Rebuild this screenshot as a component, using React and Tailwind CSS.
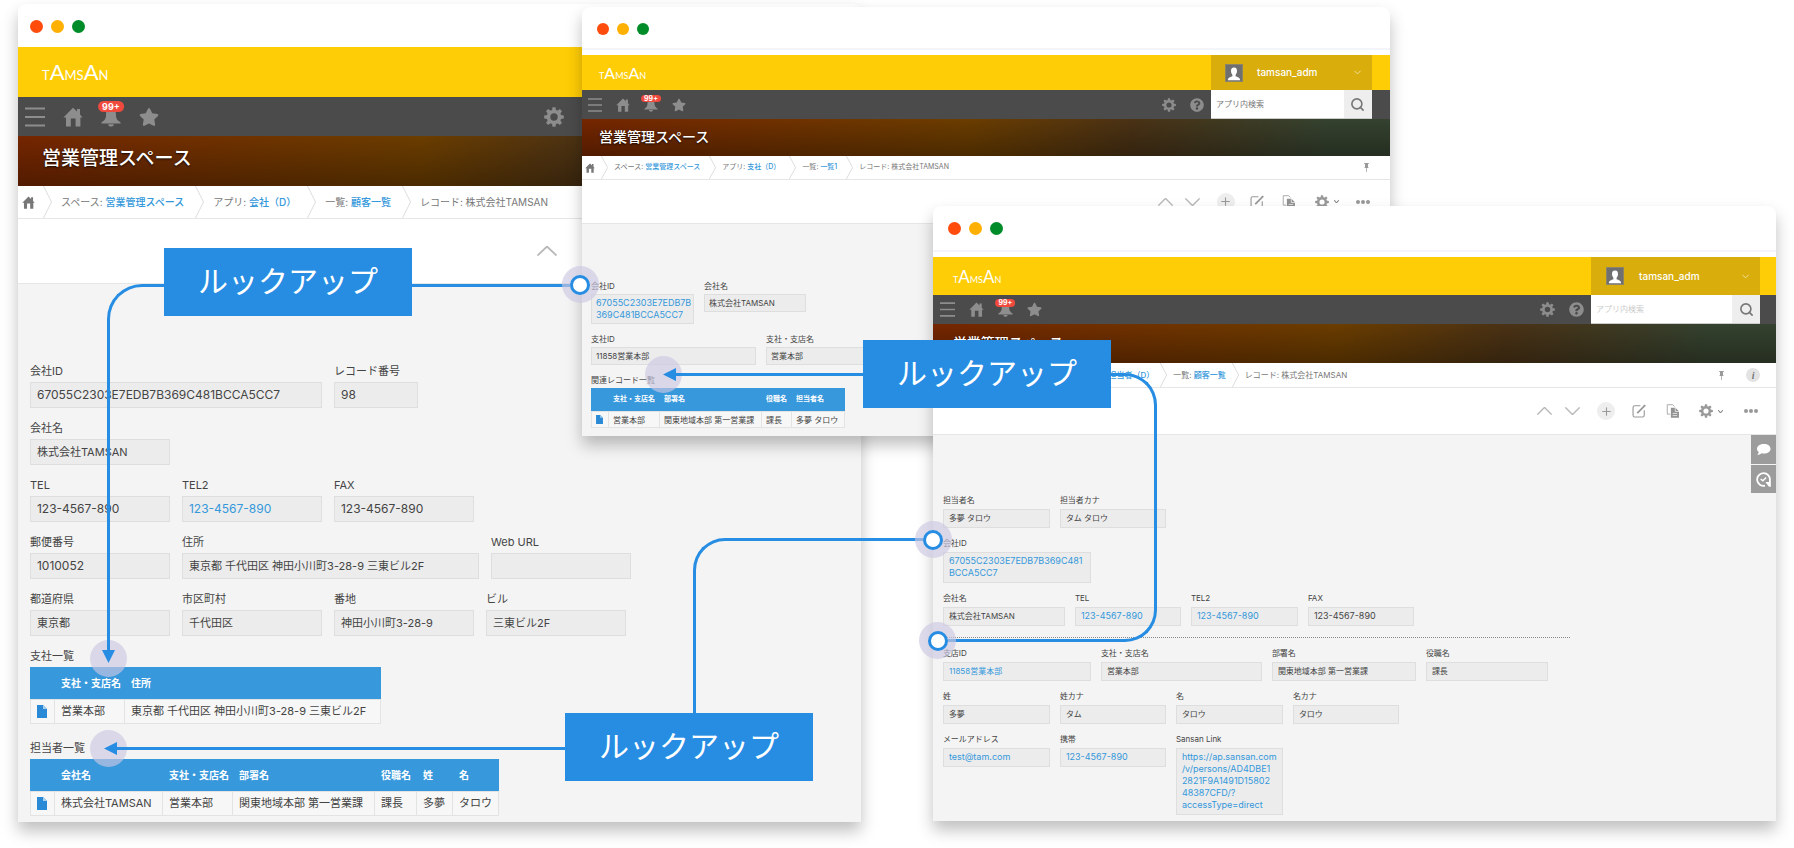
import React from 'react';
import { ChevronDown, Plus, Search } from 'lucide-react';
import { FaQuestionCircle, FaStar } from 'react-icons/fa';

// Tamaños de cada ventana: grande, pequeña y mediana
const sizes = {
  lg: {
    titleBar: 'h-[43px] pl-3 pt-[2px] gap-2',
    dot: 'size-[13px]',
    line: 'hidden',
    brand: 'h-[50px] pl-6',
    logo: 'text-[13px]',
    logoBig: 'text-[22px]',
    nav: 'h-[39px] pl-[7px] pr-[297px]',
    navGap: 'gap-[18px]',
    icon: 'size-5',
    badge: 'text-[9px] px-1 -top-[6px] h-[11px] leading-[11px]',
    hero: 'h-[50px] pl-6 pb-1 text-[19px]',
    crumbs: 'h-[33px] text-[10px]',
    crumbHome: 'pl-[4px] pr-2',
    crumbHomeIcon: 'size-[13px]',
    crumb: 'pl-[9px] pr-[11px]',
    crumbArrow: 'w-[9px]',
    toolbar: 'h-[65px]',
    body: 'pt-[77px] pb-[6px] pl-3',
    rows: 'gap-[10px]',
    row: 'gap-3',
    label: 'h-[21px] leading-[20px] text-[11px]',
    value: 'h-[26px] px-[6px] leading-[24px] text-[11px]',
    latin: 'text-[12px]',
    th: 'h-8 pl-[7px] text-[10px]',
    td: 'h-[25px] pl-[7px] text-[11px]',
    file: 'w-[10px] h-[13px]',
  },
  sm: {
    titleBar: 'h-[41px] pl-[15px] pt-[2px] gap-2',
    dot: 'size-3',
    line: 'h-[7px]',
    brand: 'h-[35px] pl-[17px]',
    logo: 'text-[9px]',
    logoBig: 'text-[16px]',
    nav: 'h-[29px] pl-[6px] pr-[18px]',
    navGap: 'gap-[14px]',
    icon: 'size-[14px]',
    badge: 'text-[7px] px-[3px] -top-[3px] h-[7px] leading-[8px]',
    hero: 'h-[37px] pl-[17px] pb-[3px] text-[14px]',
    crumbs: 'h-[24px] text-[7px]',
    crumbHome: 'pl-[3px] pr-[6px]',
    crumbHomeIcon: 'size-[10px]',
    crumb: 'pl-[6px] pr-[9px]',
    crumbArrow: 'w-[7px]',
    toolbar: 'h-[44px]',
    body: 'pt-[55px] pb-2 pl-[9px]',
    rows: 'gap-2',
    row: 'gap-[10px]',
    label: 'h-[15px] leading-[14px] text-[8px]',
    value: 'px-[4px] py-[2px] leading-[12px] text-[8px]',
    latin: 'text-[9px]',
    th: 'h-[23px] pl-[5px] text-[7px]',
    td: 'h-[17px] pl-[5px] text-[8px]',
    file: 'w-[7px] h-[9px]',
    tools: 'mr-5',
    downGap: 'ml-3',
    editGap: 'ml-[15px]',
    copyGap: 'ml-[18px]',
    moreGap: 'ml-[17px]',
  },
  md: {
    titleBar: 'h-[44px] pl-[15px] gap-2',
    dot: 'size-[13px]',
    line: 'h-[7px]',
    brand: 'h-[38px] pl-5',
    logo: 'text-[9px]',
    logoBig: 'text-[17px]',
    nav: 'h-[29px] pl-[7px] pr-[16px]',
    navGap: 'gap-[14px]',
    icon: 'size-[15px]',
    badge: 'text-[7px] px-[3px] -top-[3px] h-[8px] leading-[8px]',
    hero: 'h-[39px] pl-5 pb-[3px] text-[14px]',
    crumbs: 'h-[25px] text-[8px]',
    crumbHome: 'pl-[3px] pr-[121px]',
    crumbHomeIcon: 'size-[10px]',
    crumb: 'pl-[6px] pr-[6px]',
    crumbArrow: 'w-[7px]',
    toolbar: 'h-[47px]',
    body: 'pt-[58px] pb-[6px] pl-[10px]',
    rows: 'gap-2',
    row: 'gap-[10px]',
    label: 'h-[16px] leading-[14px] text-[8px]',
    value: 'px-[5px] pt-[2px] pb-[3px] leading-[12px] text-[8px]',
    latin: 'text-[9px]',
    th: '',
    td: '',
    file: '',
    tools: 'mr-[18px]',
    downGap: 'ml-[13px]',
    editGap: 'ml-[17px]',
    copyGap: 'ml-5',
    moreGap: 'ml-[21px]',
  },
};

function HomeIcon({ className }) {
  return (
    <svg viewBox="0 0 20 20" fill="currentColor" className={className}>
      <path d="M10 0.8 L14 4.6 V2 H17 V7.6 L19.6 10.4 H17.4 V19.5 H12.6 V11.5 H7.8 V19.5 H3 V10.4 H0.4 Z" />
    </svg>
  );
}

function BellIcon({ className }) {
  return (
    <svg viewBox="0 0 20 20" fill="currentColor" className={className}>
      <path d="M10 1 C13.5 1 15 4 15 8 C15 12 16.5 13.5 19.5 15.2 L19.5 16.6 H0.5 V15.2 C3.5 13.5 5 12 5 8 C5 4 6.5 1 10 1 Z" />
      <path d="M7 17.3 H13 C12.6 19 11.5 19.6 10 19.6 C8.5 19.6 7.4 19 7 17.3 Z" />
    </svg>
  );
}

function MenuIcon({ className }) {
  return (
    <svg viewBox="0 0 20 20" className={className}>
      <path d="M0 1.5 H20 M0 10 H20 M0 18.5 H20" stroke="currentColor" strokeWidth="2.2" />
    </svg>
  );
}

function GearIcon({ className }) {
  return (
    <svg viewBox="0 0 20 20" className={className}>
      <circle cx="10" cy="10" r="5.5" fill="none" stroke="currentColor" strokeWidth="3.6" />
      {[0, 45, 90, 135, 180, 225, 270, 315].map((angle) => (
        <path key={angle} d="M8 3.6 L8.5 0.2 H11.5 L12 3.6 Z" fill="currentColor" transform={`rotate(${angle} 10 10)`} />
      ))}
    </svg>
  );
}

function PinIcon() {
  return (
    <svg viewBox="0 0 10 18" className="h-[9px] w-[5px]" fill="#999999">
      <path d="M0.5 0 H9.5 V2 H8 V8 L9.5 10 H0.5 L2 8 V2 H0.5 Z M4.3 10 H5.7 V18 H4.3 Z" />
    </svg>
  );
}

function FileIcon({ className }) {
  return (
    <svg viewBox="0 0 10 13" className={className}>
      <path d="M0 0 H6 L10 4 V13 H0 Z" fill="#2a8ad6" />
      <path d="M6 0 V4 H10 Z" fill="#a9d2f1" />
    </svg>
  );
}

function EditIcon() {
  return (
    <svg viewBox="0 0 20 20" className="size-[14px]" fill="none" stroke="#999999">
      <path d="M12 2.5 H4 Q1.5 2.5 1.5 5 V16 Q1.5 18.5 4 18.5 H15 Q17.5 18.5 17.5 16 V9" strokeWidth="1.6" />
      <path d="M7.5 13 L17.5 3" strokeWidth="2.6" />
      <path d="M17 3.5 L19 1.5" strokeWidth="2.6" />
    </svg>
  );
}

function CopyIcon() {
  return (
    <svg viewBox="0 0 20 20" className="size-[14px]">
      <path d="M6 14.5 H1.8 V1 H9.5 L12 3.5" fill="none" stroke="#aaaaaa" strokeWidth="1.4" />
      <path d="M7 5.5 H13.5 L18.5 10.5 V19.5 H7 Z" fill="#929292" />
      <path d="M13.3 5.5 V10.7 H18.5 M9.5 13.5 H16 M9.5 16.5 H16" fill="none" stroke="#ffffff" strokeWidth="1" />
    </svg>
  );
}

function Logo({ s }) {
  return (
    <a href="#" className={`font-['Lato'] leading-none text-white ${s.logo}`}>
      T<span className={s.logoBig}>A</span>MS<span className={s.logoBig}>A</span>N
    </a>
  );
}

function UserMenu({ className, pad }) {
  return (
    <button type="button" className={`flex h-full items-center bg-[#d8ad0c] pr-[9px] text-[10px] text-white ${pad} ${className}`}>
      <span className="flex size-[18px] items-end justify-center border border-[#8c8468] bg-[#6f6f6f]">
        <svg viewBox="0 0 16 16" className="size-[14px]" fill="#ffffff">
          <path d="M8 0.5 C10.6 0.5 11.6 2.4 11.4 5 C11.2 7 10.3 8 9.8 9 V10.5 C12 11.5 15 11.8 15 15 H1 C1 11.8 4 11.5 6.2 10.5 V9 C5.7 8 4.8 7 4.6 5 C4.4 2.4 5.4 0.5 8 0.5 Z" />
        </svg>
      </span>
      <span className="font-medium">tamsan_adm</span>
      <ChevronDown className="ml-auto size-[11px] text-[#f3e3a8]" strokeWidth={2} />
    </button>
  );
}

function SearchBox({ className, inputClass }) {
  return (
    <div className={`flex h-full border-b border-[#cccccc] bg-white ${className}`}>
      <input
        type="text"
        aria-label="アプリ内検索"
        placeholder="アプリ内検索"
        className={`min-w-0 flex-1 bg-white px-[5px] text-[8px] outline-none ${inputClass}`}
      />
      <button type="button" aria-label="検索" className="flex w-[28px] items-center justify-center bg-[#eeeeee] text-[#777777]">
        <Search className="size-[15px]" strokeWidth={2.6} />
      </button>
    </div>
  );
}

function Caret({ up, bold, className }) {
  return (
    <svg viewBox="0 0 20 10" preserveAspectRatio="none" className={className} fill="none" stroke={bold ? '#888888' : '#b8b8b8'}>
      <path d={up ? 'M0.5 9.5 L10 0.5 L19.5 9.5' : 'M0.5 0.5 L10 9.5 L19.5 0.5'} strokeWidth={bold ? 4 : 1.8} />
    </svg>
  );
}

function Toolbar({ s }) {
  return (
    <div className={`flex items-center text-[#999999] ${s.tools}`}>
      <button type="button" aria-label="前へ"><Caret up className="h-2 w-[15px]" /></button>
      <button type="button" aria-label="次へ" className={s.downGap}><Caret className="h-2 w-[15px]" /></button>
      <button type="button" aria-label="追加" className="ml-[17px] flex size-[18px] items-center justify-center rounded-full bg-[#eeeeee]">
        <Plus className="size-[13px]" strokeWidth={2} />
      </button>
      <button type="button" aria-label="編集" className={s.editGap}><EditIcon /></button>
      <button type="button" aria-label="複製" className={s.copyGap}><CopyIcon /></button>
      <button type="button" aria-label="設定" className="ml-[19px] flex items-center gap-[5px]">
        <GearIcon className="size-[14px]" />
        <Caret className="h-[3px] w-[5px]" bold />
      </button>
      <button type="button" aria-label="その他" className={`flex gap-px ${s.moreGap}`}>
        <span className="size-1 rounded-full bg-[#999999]" />
        <span className="size-1 rounded-full bg-[#999999]" />
        <span className="size-1 rounded-full bg-[#999999]" />
      </button>
    </div>
  );
}

function Breadcrumbs({ s, items, children }) {
  return (
    <nav className={`flex items-stretch border-b border-[#e6e6e6] bg-white text-[#777777] ${s.crumbs}`}>
      <a href="#" aria-label="ホーム" className={`flex items-center ${s.crumbHome}`}>
        <HomeIcon className={s.crumbHomeIcon} />
      </a>
      {items.map(([prefix, text, isLink]) => (
        <div key={prefix} className="flex items-stretch">
          <svg viewBox="0 0 10 40" preserveAspectRatio="none" className={`h-full ${s.crumbArrow}`} fill="none" stroke="#dddddd">
            <path d="M0.5 0 L9.5 20 L0.5 40" vectorEffect="non-scaling-stroke" />
          </svg>
          <span className={`flex items-center whitespace-pre ${s.crumb}`}>
            {prefix}:{' '}
            {isLink ? <a href="#" className="font-medium text-[#3498db]">{text}</a> : text}
          </span>
        </div>
      ))}
      {children}
    </nav>
  );
}

function Field({ s, label, value, width, link, latin }) {
  return (
    <div className={width}>
      <div className={`whitespace-nowrap text-[#444444] ${s.label}`}>{label}</div>
      <div className={`border border-[#dedede] bg-[#ececec] whitespace-pre text-[#444444] ${s.value} ${latin ? s.latin : ''}`}>
        {link ? <a href="#" className="text-[#3498db]">{value}</a> : value}
      </div>
    </div>
  );
}

function RecordTable({ s, title, cols, head, row }) {
  return (
    <div>
      <div className={`text-[#444444] ${s.label}`}>{title}</div>
      <table className="table-fixed border-collapse text-left">
        <colgroup>
          {cols.map((col, i) => <col key={i} className={col} />)}
        </colgroup>
        <thead>
          <tr className="bg-[#3898dc] text-white">
            <th className={`p-0 ${s.th}`} />
            {head.map((text) => (
              <th key={text} className={`p-0 font-bold whitespace-nowrap ${s.th}`}>{text}</th>
            ))}
          </tr>
        </thead>
        <tbody>
          <tr className="bg-[#f7f7f7] text-[#444444] shadow-[inset_0_0_0_1px_#e3e3e3]">
            <td className={`p-0 ${s.td}`}><FileIcon className={s.file} /></td>
            {row.map((text) => (
              <td key={text} className={`p-0 whitespace-nowrap shadow-[inset_1px_0_0_#e3e3e3] ${s.td}`}>{text}</td>
            ))}
          </tr>
        </tbody>
      </table>
    </div>
  );
}

function AppWindow({ s, className, user, search, crumbs, crumbsEnd, toolbar, children }) {
  return (
    <section className={`absolute rounded-t-lg bg-[#f4f4f4] shadow-[0_9px_16px_rgba(0,0,0,0.25)] ${className}`}>
      <div className={`flex items-center rounded-t-lg bg-white ${s.titleBar}`}>
        <span className={`rounded-full bg-[#ff4b0b] ${s.dot}`} />
        <span className={`rounded-full bg-[#ffb000] ${s.dot}`} />
        <span className={`rounded-full bg-[#008c28] ${s.dot}`} />
      </div>
      <div className={`border-t-2 border-[#f3f5fa] bg-white ${s.line}`} />
      <header className={`flex items-center bg-[#ffcd05] ${s.brand}`}>
        <Logo s={s} />
        {user}
      </header>
      <div className={`flex items-center bg-[#4b4b4b] text-[#8d8d8d] ${s.nav}`}>
        <div className={`flex items-center ${s.navGap}`}>
          <button type="button" aria-label="メニュー"><MenuIcon className={s.icon} /></button>
          <button type="button" aria-label="ホーム"><HomeIcon className={s.icon} /></button>
          <button type="button" aria-label="通知" className="relative">
            <BellIcon className={s.icon} />
            <span className={`absolute left-1/2 -translate-x-1/2 rounded-full bg-[#ef4a3d] font-bold text-white ${s.badge}`}>99+</span>
          </button>
          <button type="button" aria-label="お気に入り"><FaStar className={s.icon} /></button>
        </div>
        {search}
      </div>
      <div className={`flex items-center bg-[linear-gradient(to_bottom,rgba(0,0,0,0),rgba(0,0,0,0.3)),linear-gradient(to_right,#752600,#6b3d00_48%,#4a3215_68%,#35422f_92%)] font-medium text-white text-shadow-[0_1px_2px_rgba(0,0,0,0.8)] ${s.hero}`}>
        営業管理スペース
      </div>
      <Breadcrumbs s={s} items={crumbs}>{crumbsEnd}</Breadcrumbs>
      <div className={`flex items-center justify-end border-b border-[#e6e6e6] bg-white ${s.toolbar}`}>{toolbar}</div>
      <div className={`relative flex flex-col ${s.body} ${s.rows}`}>{children}</div>
    </section>
  );
}

function CompanyWindow() {
  const s = sizes.lg;
  return (
    <AppWindow
      s={s}
      className="top-1 left-[1%] w-[47%]"
      search={<button type="button" aria-label="設定" className="ml-auto"><GearIcon className="size-5" /></button>}
      crumbs={[
        ['スペース', '営業管理スペース', true],
        ['アプリ', '会社（D）', true],
        ['一覧', '顧客一覧', true],
        ['レコード', '株式会社TAMSAN', false],
      ]}
      toolbar={<button type="button" aria-label="前へ" className="mr-[304px]"><Caret up className="h-[10px] w-5" /></button>}
    >
      <div className={`flex ${s.row}`}>
        <Field s={s} label="会社ID" value="67055C2303E7EDB7B369C481BCCA5CC7" width="w-[292px]" latin />
        <Field s={s} label="レコード番号" value="98" width="w-[84px]" latin />
      </div>
      <div className={`flex ${s.row}`}>
        <Field s={s} label="会社名" value="株式会社TAMSAN" width="w-[140px]" />
      </div>
      <div className={`flex ${s.row}`}>
        <Field s={s} label="TEL" value="123-4567-890" width="w-[140px]" latin />
        <Field s={s} label="TEL2" value="123-4567-890" width="w-[140px]" latin link />
        <Field s={s} label="FAX" value="123-4567-890" width="w-[140px]" latin />
      </div>
      <div className={`flex ${s.row}`}>
        <Field s={s} label="郵便番号" value="1010052" width="w-[140px]" latin />
        <Field s={s} label="住所" value="東京都 千代田区 神田小川町3-28-9 三東ビル2F" width="w-[297px]" />
        <Field s={s} label="Web URL" value="" width="w-[140px]" />
      </div>
      <div className={`flex ${s.row}`}>
        <Field s={s} label="都道府県" value="東京都" width="w-[140px]" />
        <Field s={s} label="市区町村" value="千代田区" width="w-[140px]" />
        <Field s={s} label="番地" value="神田小川町3-28-9" width="w-[140px]" />
        <Field s={s} label="ビル" value="三東ビル2F" width="w-[140px]" />
      </div>
      <div className="flex flex-col gap-[14px]">
        <RecordTable
          s={s}
          title="支社一覧"
          cols={['w-[24px]', 'w-[70px]', 'w-[257px]']}
          head={['支社・支店名', '住所']}
          row={['営業本部', '東京都 千代田区 神田小川町3-28-9 三東ビル2F']}
        />
        <RecordTable
          s={s}
          title="担当者一覧"
          cols={['w-[24px]', 'w-[108px]', 'w-[70px]', 'w-[142px]', 'w-[42px]', 'w-[36px]', 'w-[47px]']}
          head={['会社名', '支社・支店名', '部署名', '役職名', '姓', '名']}
          row={['株式会社TAMSAN', '営業本部', '関東地域本部 第一営業課', '課長', '多夢', 'タロウ']}
        />
      </div>
    </AppWindow>
  );
}

function BranchWindow() {
  const s = sizes.sm;
  return (
    <AppWindow
      s={s}
      className="top-[7px] left-[32.44%] w-[45.04%]"
      user={<UserMenu className="mr-[18px] ml-auto w-[161px]" pad="gap-[14px] pl-[14px]" />}
      search={
        <>
          <button type="button" aria-label="設定" className="mr-[14px] ml-auto"><GearIcon className={s.icon} /></button>
          <button type="button" aria-label="ヘルプ" className="mr-[7px]"><FaQuestionCircle className={s.icon} /></button>
          <SearchBox className="w-[161px]" inputClass="placeholder:text-[#777777]" />
        </>
      }
      crumbs={[
        ['スペース', '営業管理スペース', true],
        ['アプリ', '支社（D）', true],
        ['一覧', '一覧1', true],
        ['レコード', '株式会社TAMSAN', false],
      ]}
      crumbsEnd={<button type="button" aria-label="固定" className="mr-[21px] ml-auto"><PinIcon /></button>}
      toolbar={<Toolbar s={s} />}
    >
      <div className={`flex items-start ${s.row}`}>
        <Field s={s} label="会社ID" value={'67055C2303E7EDB7B\n369C481BCCA5CC7'} width="w-[103px]" latin link />
        <Field s={s} label="会社名" value="株式会社TAMSAN" width="w-[102px]" />
      </div>
      <div className={`flex ${s.row}`}>
        <Field s={s} label="支社ID" value="11858営業本部" width="w-[165px]" />
        <Field s={s} label="支社・支店名" value="営業本部" width="w-[160px]" />
      </div>
      <RecordTable
        s={s}
        title="関連レコード一覧"
        cols={['w-[17px]', 'w-[51px]', 'w-[102px]', 'w-[30px]', 'w-[54px]']}
        head={['支社・支店名', '部署名', '役職名', '担当者名']}
        row={['営業本部', '関東地域本部 第一営業課', '課長', '多夢 タロウ']}
      />
    </AppWindow>
  );
}

function ContactWindow() {
  const s = sizes.md;
  return (
    <AppWindow
      s={s}
      className="top-[206px] left-[52%] w-[47%]"
      user={<UserMenu className="mr-4 ml-auto w-[169px]" pad="gap-[15px] pl-[15px]" />}
      search={
        <>
          <button type="button" aria-label="設定" className="mr-[14px] ml-auto"><GearIcon className={s.icon} /></button>
          <button type="button" aria-label="ヘルプ" className="mr-[7px]"><FaQuestionCircle className={s.icon} /></button>
          <SearchBox className="w-[169px]" inputClass="placeholder:text-[#cccccc]" />
        </>
      }
      crumbs={[
        ['アプリ', '担当者（D）', true],
        ['一覧', '顧客一覧', true],
        ['レコード', '株式会社TAMSAN', false],
      ]}
      crumbsEnd={
        <div className="mr-4 ml-auto flex items-center gap-[22px]">
          <button type="button" aria-label="固定"><PinIcon /></button>
          <button type="button" aria-label="情報" className="flex size-[14px] items-center justify-center rounded-full bg-[#e3e3e3] font-['Liberation_Serif'] text-[10px] font-bold text-[#777777] italic">i</button>
        </div>
      }
      toolbar={<Toolbar s={s} />}
    >
      <div className="absolute top-0 right-0 flex flex-col gap-px">
        <button type="button" aria-label="コメント" className="flex h-[29px] w-[25px] items-center justify-center bg-[#9c9c9c]">
          <svg viewBox="0 0 16 14" className="h-[13px] w-[15px]" fill="#ffffff">
            <path d="M8.5 1 C12.6 1 15.6 3.2 15.6 6.2 C15.6 9.2 12.6 11.3 8.5 11.3 C7.6 11.3 6.6 11.2 5.8 11 C4.6 12 3.2 12.7 1.2 12.8 C2.2 12 2.8 11 2.8 9.7 C1.6 8.8 1 7.6 1 6.2 C1 3.2 4.4 1 8.5 1 Z" />
          </svg>
        </button>
        <button type="button" aria-label="変更履歴" className="flex h-7 w-[25px] items-center justify-center bg-[#9c9c9c]">
          <svg viewBox="0 0 16 16" className="size-[15px]" fill="none" stroke="#ffffff" strokeWidth="1.9">
            <path d="M9.6 14.6 A6.8 6.8 0 1 1 14.8 8.6 V11" />
            <path d="M5 7.6 L7.4 9.4 L10.8 5.8" strokeWidth="1.5" />
            <path d="M10 10.6 H15.8 V15.6 H13.8 Z" fill="#ffffff" stroke="none" />
          </svg>
        </button>
      </div>
      <div className={`flex ${s.row}`}>
        <Field s={s} label="担当者名" value="多夢 タロウ" width="w-[107px]" />
        <Field s={s} label="担当者カナ" value="タム タロウ" width="w-[106px]" />
      </div>
      <div className={`flex ${s.row}`}>
        <Field s={s} label="会社ID" value={'67055C2303E7EDB7B369C481\nBCCA5CC7'} width="w-[148px]" latin link />
      </div>
      <div className={`flex ${s.row}`}>
        <Field s={s} label="会社名" value="株式会社TAMSAN" width="w-[122px]" />
        <Field s={s} label="TEL" value="123-4567-890" width="w-[106px]" latin link />
        <Field s={s} label="TEL2" value="123-4567-890" width="w-[107px]" latin link />
        <Field s={s} label="FAX" value="123-4567-890" width="w-[106px]" latin />
      </div>
      <hr className="mt-[3px] mr-[206px] border-t border-dotted border-[#888888]" />
      <div className={`flex ${s.row}`}>
        <Field s={s} label="支店ID" value="11858営業本部" width="w-[148px]" link />
        <Field s={s} label="支社・支店名" value="営業本部" width="w-[161px]" />
        <Field s={s} label="部署名" value="関東地域本部 第一営業課" width="w-[144px]" />
        <Field s={s} label="役職名" value="課長" width="w-[122px]" />
      </div>
      <div className={`flex ${s.row}`}>
        <Field s={s} label="姓" value="多夢" width="w-[107px]" />
        <Field s={s} label="姓カナ" value="タム" width="w-[106px]" />
        <Field s={s} label="名" value="タロウ" width="w-[107px]" />
        <Field s={s} label="名カナ" value="タロウ" width="w-[106px]" />
      </div>
      <div className={`flex items-start ${s.row}`}>
        <Field s={s} label="メールアドレス" value="test@tam.com" width="w-[107px]" latin link />
        <Field s={s} label="携帯" value="123-4567-890" width="w-[106px]" latin link />
        <Field
          s={s}
          label="Sansan Link"
          value={'https://ap.sansan.com\n/v/persons/AD4DBE1\n2821F9A1491D15802\n48387CFD/?\naccessType=direct'}
          width="w-[107px]"
          latin
          link
        />
      </div>
    </AppWindow>
  );
}

function Halo({ className, ring }) {
  return (
    <div className={`absolute flex size-[37px] items-center justify-center rounded-full bg-[#cbc8e2]/65 ${className}`}>
      {ring && <span className="size-5 rounded-full border-3 border-[#268de3] bg-white" />}
    </div>
  );
}

function Callout({ className }) {
  return (
    <div className={`absolute flex h-[68px] w-[248px] items-center justify-center bg-[#268de3] pb-[2px] text-[30px] text-white ${className}`}>
      ルックアップ
    </div>
  );
}

function ArrowHead({ className, down }) {
  return (
    <svg viewBox="0 0 13 13" className={`absolute size-[13px] ${className}`} fill="#268de3">
      <path d={down ? 'M0 0 H13 L6.5 13 Z' : 'M13 0 V13 L0 6.5 Z'} />
    </svg>
  );
}

export default function App() {
  return (
    <main className="relative min-h-screen w-full overflow-hidden bg-white font-['Inter','Noto_Sans_CJK_JP',sans-serif]">
      <CompanyWindow />
      <BranchWindow />
      <ContactWindow />

      {/* Halos de las flechas */}
      <Halo className="top-[640px] left-[5.04%]" />
      <Halo className="top-[730px] left-[5.04%]" />
      <Halo className="top-[356px] left-[35.98%]" />

      {/* Conectores */}
      <div className="absolute top-[284px] left-[5.96%] h-[368px] w-[3.18%] rounded-tl-[35px] border-t-3 border-l-3 border-[#268de3]" />
      <ArrowHead className="top-[650px] left-[5.68%]" down />
      <div className="absolute top-[284px] left-[22.97%] w-[8.81%] border-t-3 border-[#268de3]" />
      <div className="absolute top-[373px] left-[37.57%] w-[10.54%] border-t-3 border-[#268de3]" />
      <ArrowHead className="top-[368px] left-[36.96%]" />
      <div className="absolute top-[373px] left-[61.93%] h-[120px] w-[2.56%] rounded-tr-[32px] border-t-3 border-r-3 border-[#268de3]" />
      <div className="absolute top-[493px] left-[52.84%] h-[149px] w-[11.65%] rounded-br-[32px] border-r-3 border-b-3 border-[#268de3]" />
      <div className="absolute top-[747px] left-[6.41%] w-[25.08%] border-t-3 border-[#268de3]" />
      <ArrowHead className="top-[742px] left-[5.8%]" />
      <div className="absolute top-[538px] left-[38.63%] h-[175px] w-[12.82%] rounded-tl-[32px] border-t-3 border-l-3 border-[#268de3]" />

      <Halo className="top-[266px] left-[31.3%]" ring />
      <Halo className="top-[521px] left-[50.98%]" ring />
      <Halo className="top-[622px] left-[51.25%]" ring />

      <Callout className="top-[248px] left-[9.14%]" />
      <Callout className="top-[340px] left-[48.1%]" />
      <Callout className="top-[713px] left-[31.49%]" />
    </main>
  );
}
